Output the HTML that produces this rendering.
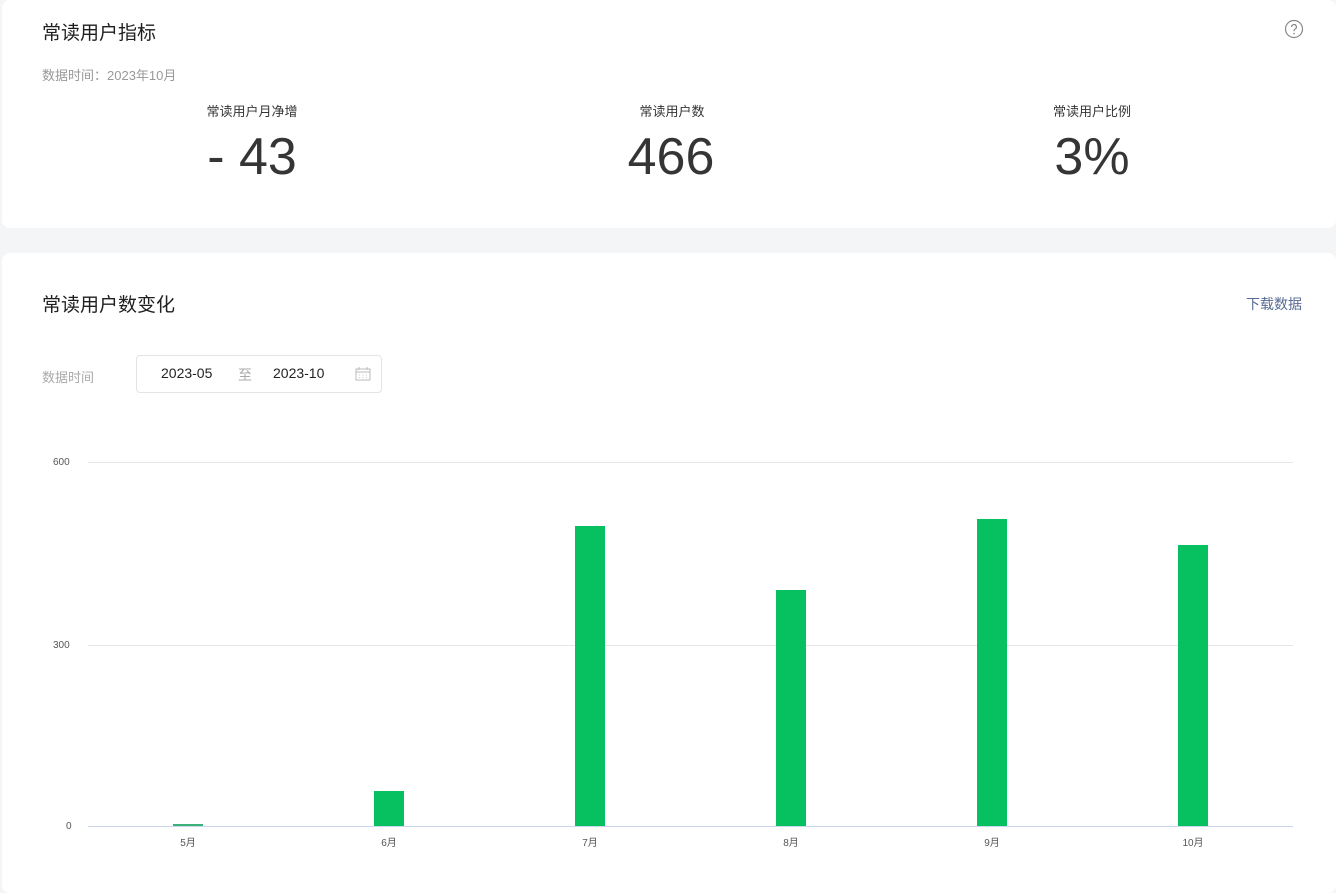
<!DOCTYPE html>
<html><head><meta charset="utf-8"><style>
*{margin:0;padding:0;box-sizing:border-box}
body{width:1336px;height:874px;background:#f4f5f7;font-family:"Liberation Sans","Noto Sans CJK SC",sans-serif;position:relative;overflow:hidden;color:#333}
.card{position:absolute;background:#fff;border-radius:8px}
.a{position:absolute;white-space:nowrap}
.c{transform:translateX(-50%)}
.big{font-size:52px;color:#353535;top:127px;font-weight:300}
.lab{font-size:13px;color:#353535;top:101px}
.bar{position:absolute;width:30px;background:#07c160}
.xl{position:absolute;top:834px;font-size:10px;color:#555;transform:translateX(-50%)}
.yl{position:absolute;font-size:10px;color:#555}
.grid{position:absolute;left:88px;width:1205px;height:1px;background:#e6e6e6}
</style></head><body>
<div class="card" style="left:2px;top:0;width:1334px;height:228px"></div>
<div class="card" style="left:2px;top:253px;width:1334px;height:640px"></div>
<div class="a" style="left:42px;top:18px;font-size:19px;color:#1f1f1f">常读用户指标</div>
<div class="a" style="left:42px;top:65px;font-size:13px;color:#999">数据时间：2023年10月</div>
<svg class="a" style="left:1284px;top:19px" width="20" height="20" viewBox="0 0 20 20"><circle cx="10" cy="10" r="8.5" fill="none" stroke="#888" stroke-width="1.2"/><path d="M7.6 8a2.4 2.4 0 1 1 3.4 2.1c-.7.4-1 .8-1 1.6v.6" fill="none" stroke="#888" stroke-width="1.2"/><circle cx="10" cy="14.6" r=".8" fill="#888"/></svg>
<div class="a c lab" style="left:252px">常读用户月净增</div>
<div class="a c big" style="left:252px">- 43</div>
<div class="a c lab" style="left:672px">常读用户数</div>
<div class="a c big" style="left:671px">466</div>
<div class="a c lab" style="left:1092px">常读用户比例</div>
<div class="a c big" style="left:1092px">3%</div>

<div class="a" style="left:42px;top:290px;font-size:19px;color:#1f1f1f">常读用户数变化</div>
<div class="a" style="left:1246px;top:294px;font-size:14px;color:#576b95">下载数据</div>
<div class="a" style="left:42px;top:367px;font-size:13px;color:#aaa">数据时间</div>
<div class="a" style="left:136px;top:355px;width:246px;height:38px;border:1px solid #e4e4e4;border-radius:4px"></div>
<div class="a" style="left:161px;top:365px;font-size:14px;color:#222">2023-05</div>
<div class="a" style="left:238px;top:365px;font-size:14px;color:#aaa">至</div>
<div class="a" style="left:273px;top:365px;font-size:14px;color:#222">2023-10</div>
<svg class="a" style="left:355px;top:367px" width="16" height="14" viewBox="0 0 16 14"><rect x="1" y="2" width="14" height="11" fill="none" stroke="#bbb"/><path d="M1 5h14M4 0v3M12 0v3" stroke="#bbb"/><path d="M4 8h1M7.5 8h1M11 8h1M4 10.5h1M7.5 10.5h1M11 10.5h1" stroke="#ccc"/></svg>

<div class="grid" style="top:462px"></div>
<div class="grid" style="top:645px"></div>
<div class="grid" style="top:826px;background:#ccd6eb"></div>
<div class="yl" style="top:457px;left:53px">600</div>
<div class="yl" style="top:640px;left:53px">300</div>
<div class="yl" style="top:821px;left:66px">0</div>

<div class="bar" style="left:173px;top:824px;height:2px;background:#3cb27a"></div>
<div class="bar" style="left:374px;top:791px;height:35px"></div>
<div class="bar" style="left:575px;top:526px;height:300px"></div>
<div class="bar" style="left:776px;top:590px;height:236px"></div>
<div class="bar" style="left:977px;top:519px;height:307px"></div>
<div class="bar" style="left:1178px;top:545px;height:281px"></div>

<div class="xl" style="left:188px">5月</div>
<div class="xl" style="left:389px">6月</div>
<div class="xl" style="left:590px">7月</div>
<div class="xl" style="left:791px">8月</div>
<div class="xl" style="left:992px">9月</div>
<div class="xl" style="left:1193px">10月</div>
</body></html>
